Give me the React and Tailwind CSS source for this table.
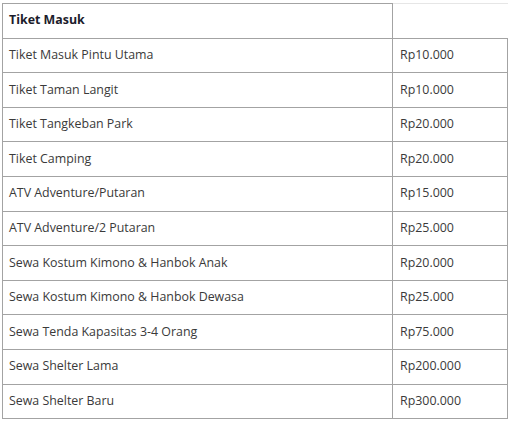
export default function App() {
  const rows = [
    ['Tiket Masuk Pintu Utama', 'Rp10.000'],
    ['Tiket Taman Langit', 'Rp10.000'],
    ['Tiket Tangkeban Park', 'Rp20.000'],
    ['Tiket Camping', 'Rp20.000'],
    ['ATV Adventure/Putaran', 'Rp15.000'],
    ['ATV Adventure/2 Putaran', 'Rp25.000'],
    ['Sewa Kostum Kimono & Hanbok Anak', 'Rp20.000'],
    ['Sewa Kostum Kimono & Hanbok Dewasa', 'Rp25.000'],
    ['Sewa Tenda Kapasitas 3-4 Orang', 'Rp75.000'],
    ['Sewa Shelter Lama', 'Rp200.000'],
    ['Sewa Shelter Baru', 'Rp300.000'],
  ];

  return (
    <div className="w-[512px] h-[421px] bg-white pt-[3px] pl-[2px] overflow-hidden" style={{ fontFamily: '"Open Sans", "Noto Sans", sans-serif' }}>
      <table className="w-[506px] border-collapse table-fixed text-[12.4px] text-[#3a3a3a]">
        <colgroup>
          <col className="w-[390px]" />
          <col />
        </colgroup>
        <tbody>
          <tr className="h-[34.6px]">
            <td className="border border-[#a3a3a3] pl-[6px] pr-[8px] font-bold text-[#1c1c2b]">Tiket Masuk</td>
            <td className="border-l border-b border-[#a3a3a3] border-t border-t-[#e6e6e6] px-[8px]"></td>
          </tr>
          {rows.map(([name, price]) => (
            <tr key={name} className="h-[34.6px]">
              <td className="border border-[#a3a3a3] pl-[6px] pr-[8px]">{name}</td>
              <td className="border border-[#a3a3a3] px-[7px]">{price}</td>
            </tr>
          ))}
        </tbody>
      </table>
    </div>
  );
}
